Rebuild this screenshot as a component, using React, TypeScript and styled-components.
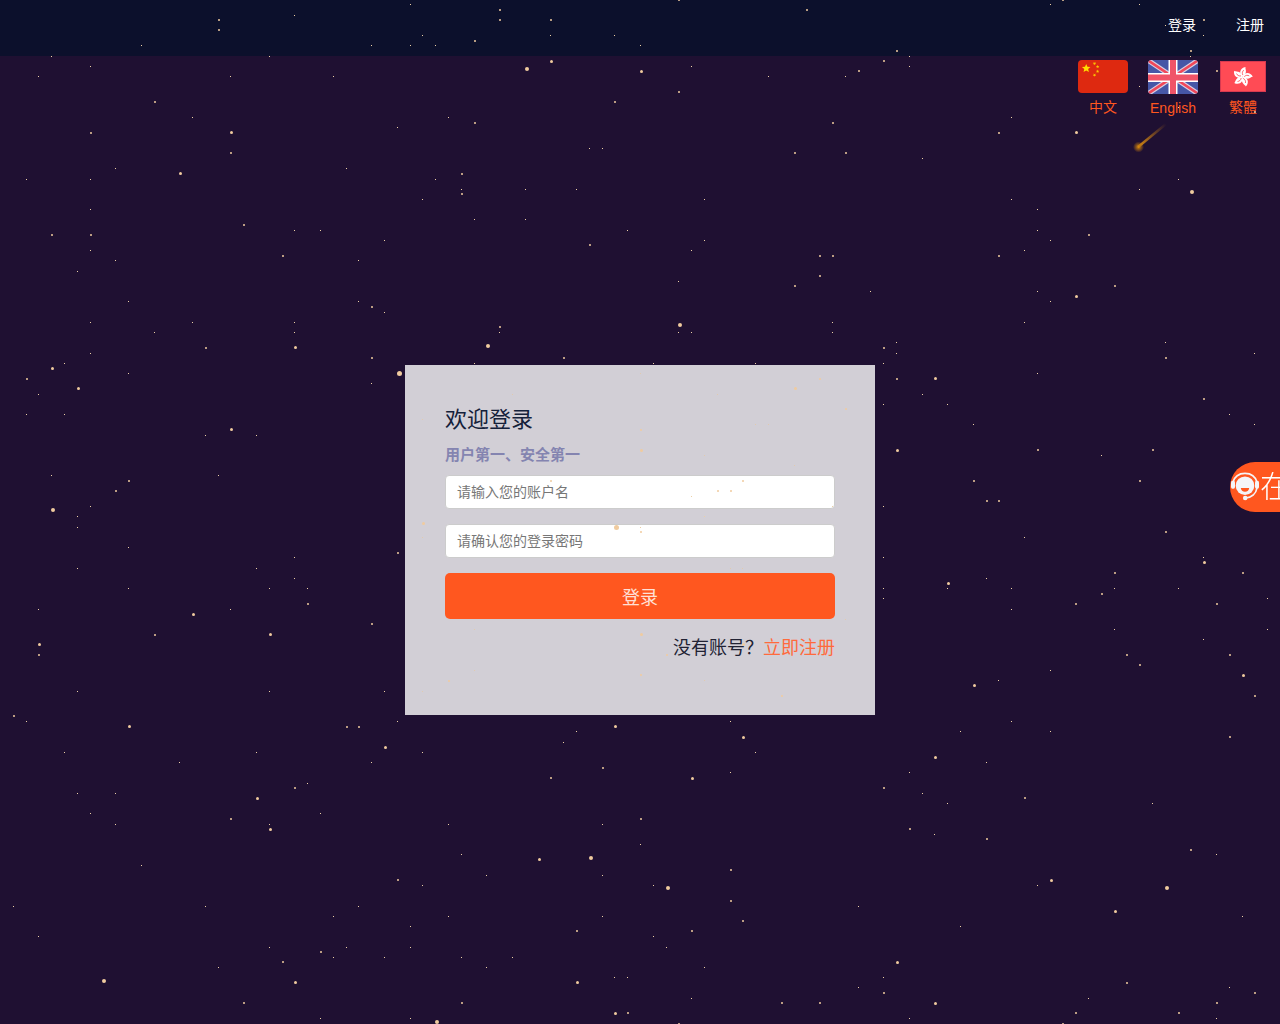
import React from "react";
import styled, { createGlobalStyle } from "styled-components";

const GlobalStyle = createGlobalStyle`
  *, *::before, *::after { box-sizing: border-box; }
  body {
    margin: 0;
    background: #1f1032;
    color: #212233;
    font-family: "Liberation Sans", "Noto Sans CJK SC", sans-serif;
    font-size: 14px;
    line-height: 20px;
  }
`;

const ACCENT = "#ff571f";

const Page = styled.div`
  position: relative;
  min-height: 100vh;
  display: flex;
  flex-direction: column;
  overflow: hidden;
`;

const Header = styled.header`
  height: 56px;
  flex: none;
  display: flex;
  align-items: center;
  justify-content: flex-end;
  gap: 40px;
  padding: 0 16px 6px;
  background: #0c102c;
`;

const NavLink = styled.a`
  color: #fff;
  text-decoration: none;
`;

const Main = styled.main`
  flex: 1;
  display: grid;
`;

const Languages = styled.nav`
  grid-area: 1 / 1;
  justify-self: end;
  align-self: start;
  display: flex;
  gap: 20px;
  padding: 4px 12px;
`;

const Language = styled.a`
  width: 50px;
  display: flex;
  flex-direction: column;
  align-items: center;
  gap: 4px;
  color: ${ACCENT};
  text-decoration: none;
  svg { display: block; }
`;

const Card = styled.form`
  grid-area: 1 / 1;
  place-self: center;
  width: 470px;
  max-width: 100%;
  min-height: 350px;
  padding: 40px;
  display: flex;
  flex-direction: column;
  background: rgba(255, 255, 255, 0.8);
`;

const Title = styled.h1`
  margin: 0;
  font-size: 22px;
  line-height: 30px;
  font-weight: 400;
  color: #14213a;
`;

const Subtitle = styled.p`
  margin: 10px 0;
  font-size: 15px;
  font-weight: 700;
  color: #8484b0;
`;

const Field = styled.input`
  width: 100%;
  height: 34px;
  margin-bottom: 15px;
  padding: 0 11px;
  border: 1px solid #ccc;
  border-radius: 4px;
  background: #fff;
  color: #333;
  font: inherit;
  outline: none;
  &::placeholder { color: #777; opacity: 1; }
`;

const Submit = styled.button`
  height: 46px;
  border: 0;
  border-radius: 5px;
  background: ${ACCENT};
  color: #ffe0d6;
  font-family: inherit;
  font-size: 18px;
  cursor: pointer;
`;

const SignUp = styled.p`
  margin: 15px 0 0;
  font-size: 18px;
  line-height: 28px;
  text-align: right;
`;

const SignUpLink = styled.a`
  color: #ff6a3c;
  text-decoration: none;
`;

const Support = styled.a`
  position: fixed;
  top: 462px;
  left: calc(100% - 50px);
  height: 50px;
  display: flex;
  align-items: center;
  padding-right: 20px;
  border-radius: 25px 0 0 25px;
  background: ${ACCENT};
  color: #fff;
  font-size: 30px;
  line-height: 50px;
  font-weight: 300;
  white-space: nowrap;
  text-decoration: none;
  svg { flex: none; }
`;

const Sky = styled.svg`
  position: absolute;
  inset: 0;
  width: 100%;
  height: 100%;
  pointer-events: none;
`;

const parse = (s: string) => s.trim().split(/\s+/).map((p) => p.split(",").map(Number));

const tiny = parse(`
410,4 294,15 422,35 141,45 371,45 410,45 51,56 269,56 90,66 38,76 230,76 333,76 192,117 397,127 115,168 346,168
26,179 90,179 422,199 90,209 294,230 320,230 384,240 90,250 115,260 358,260 77,271 128,301 358,301 384,312
90,322 192,322 294,322 154,332 294,332 90,353 64,363 128,373 371,383 38,394 26,414 64,414 205,435 256,435
51,475 218,475 90,506
435,45 550,35 614,35 640,45 691,66 768,76 845,76 448,117 589,148 602,148 435,179 461,189 525,189 576,189
704,199 474,219 525,219 627,230 704,240 691,250 678,281 832,322 499,332 678,332 691,332 832,332 474,363
653,363 755,363
1050,4 1139,4 1165,25 1203,35 909,56 909,66 1190,56 1139,86 1178,107 1011,117 922,158 1139,189 1178,179
1011,199 1037,209 1037,230 1050,240 1024,250 870,291 1037,291 1050,301 1024,322 896,342 896,353 883,363
1165,342 1254,353 1037,373 922,394 883,404 947,404 973,424 1229,414 1254,424 1101,455 883,506
77,516 77,527 128,547 77,568 294,557 256,568 294,578 128,588 269,588 307,588 38,609 230,609 77,691 269,691
384,691 26,721 397,721 64,752 256,752 422,752 179,762 371,762 77,793 115,793 307,783 90,813 320,813 115,824
269,824 141,865 422,885 13,906 205,906 358,906 333,916 38,936 410,926 269,947 346,947 410,947 333,957 384,957
218,967 320,1018 410,1018
730,721 576,731 563,742 755,752 730,772 448,824 602,824 640,844 461,854 486,875 602,875 653,885 448,916
602,916 653,936 666,947 461,957 512,957 486,967 704,967 614,977 627,977 691,998
1024,537 883,557 1203,557 986,578 883,588 883,598 947,588 1011,588 1114,588 1178,588 1267,598 1011,609
1114,629 1267,629 1203,639 1050,670 998,680 1011,721 960,731 1050,731 986,762 909,772 922,793 947,803
1152,803 934,834 1216,854 1037,885 858,906 1242,916 960,926 883,977 858,987 1229,987 1088,998 909,1018 1216,1018
512,486 640,527 691,496 832,506 704,516`);

const faint = parse(`
512,394 422,419 640,373 422,537 717,394 755,424 768,424 704,455 794,465 730,568 742,568 474,629 474,670
704,680 422,691 845,619`);

const small = parse(`
218,19 218,29 154,101 90,132 230,152 51,234 90,234 243,224 282,255 371,306 205,347 371,357 26,378 128,480
115,490 678,-1 499,9 499,19 550,19 474,40 806,9 678,91 614,101 474,122 832,122 794,152 845,152 461,173
461,193 589,244 819,255 832,255 819,275 794,285 499,326 563,357
1062,-1 1203,19 896,50 1190,50 883,60 858,70 1216,70 1254,111 998,132 1088,234 998,255 1114,285 883,347
1165,357 896,378 1203,398 1037,449 1152,449 973,480 1139,480 986,500 998,500
397,552 307,603 154,634 371,623 38,654 13,715 346,726 358,726 294,787 230,818 397,879 320,951 282,961 243,1002
602,767 550,777 640,818 730,869 730,900 742,920 576,930 691,930 461,1002 781,1002 819,1002 627,1012 678,1023
1165,531 1114,572 1242,572 1101,593 1075,603 1216,603 1126,654 1229,654 1139,664 1254,695 1229,736 883,787
1024,797 909,828 986,838 1190,849 1126,982 883,992 1254,992 1216,1002 1075,1012 1178,1012 1062,1023
640,429 550,480 640,531 666,654 640,674 448,680 781,695 819,378 845,408 742,480 717,490 730,490`);

const medium = parse(`
231,132 180,173 295,347 52,368 78,388 231,429 551,61 641,71 1076,132 1076,296 935,378 897,450
193,614 39,644 270,634 129,726 385,747 257,798 270,829 295,982 615,726 743,737 692,778 539,859 577,982
615,1013 1204,562 948,583 1243,675 974,685 935,757 1051,880 1115,911 897,962 935,1003
641,450 423,523 641,634 743,644 795,388`);

const large = parse(`
53,510 527,69 680,325 488,346 1192,192 104,981 591,858 668,888 437,1022 1167,888`);

const giant = parse(`399,373 616,527`);

const StarField = () => (
  <Sky viewBox="0 0 1280 1024" preserveAspectRatio="xMidYMid slice" aria-hidden="true">
    <defs>
      <linearGradient id="tail" gradientUnits="userSpaceOnUse" x1="1138" y1="147" x2="1166" y2="124">
        <stop offset="0" stopColor="#d98a10" />
        <stop offset="1" stopColor="#d98a10" stopOpacity="0" />
      </linearGradient>
      <radialGradient id="glow">
        <stop offset="0" stopColor="#d98a10" />
        <stop offset="0.4" stopColor="#b8720f" stopOpacity="0.7" />
        <stop offset="1" stopColor="#b8720f" stopOpacity="0" />
      </radialGradient>
    </defs>
    <g fill="#ecd0a6">
      {tiny.map(([x, y]) => <rect key={`${x}-${y}`} x={x} y={y} width="1" height="1" />)}
    </g>
    <g fill="#ecc796" opacity="0.6">
      {faint.map(([x, y]) => <rect key={`${x}-${y}`} x={x} y={y} width="1" height="1" />)}
    </g>
    <g fill="#f0cb9f">
      {small.map(([x, y]) => <circle key={`${x}-${y}`} cx={x + 1} cy={y + 1} r="1" />)}
      {medium.map(([x, y]) => <circle key={`${x}-${y}`} cx={x + 0.5} cy={y + 0.5} r="1.5" />)}
      {large.map(([x, y]) => <circle key={`${x}-${y}`} cx={x} cy={y} r="2" />)}
      {giant.map(([x, y]) => <circle key={`${x}-${y}`} cx={x + 0.5} cy={y + 0.5} r="2.5" />)}
    </g>
    <path d="M1138 147L1166 124" stroke="url(#tail)" strokeWidth="2.4" />
    <circle cx="1138.5" cy="147" r="5.5" fill="url(#glow)" />
  </Sky>
);

const star = (cx: number, cy: number, r: number, turn = -90) =>
  Array.from({ length: 10 }, (_, i) => {
    const a = ((turn + i * 36) * Math.PI) / 180;
    const d = i % 2 ? r * 0.45 : r;
    return `${cx + d * Math.cos(a)},${cy + d * Math.sin(a)}`;
  }).join(" ");

const ChinaFlag = () => (
  <svg width="50" height="33" viewBox="0 0 50 33" aria-hidden="true">
    <rect width="50" height="33" rx="4" fill="#de2910" />
    <g fill="#ffde00">
      <polygon points={star(8.2, 8.4, 4.5)} />
      <g opacity="0.85">
        <polygon points={star(16.5, 3.5, 1.8, 20)} />
        <polygon points={star(19.6, 6.7, 1.8, 50)} />
        <polygon points={star(19.6, 11.4, 1.8)} />
        <polygon points={star(16.5, 15, 1.8, 20)} />
      </g>
    </g>
  </svg>
);

const UkFlag = () => (
  <svg width="50" height="34" viewBox="0 0 50 34" aria-hidden="true">
    <clipPath id="uk"><rect width="50" height="34" rx="4" /></clipPath>
    <g clipPath="url(#uk)">
      <rect width="50" height="34" fill="#4657a7" />
      <path d="M1 1L49 33M49 1L1 33" stroke="#d9cfe2" strokeWidth="5" strokeLinecap="square" />
      <path d="M1 1L49 33M49 1L1 33" stroke="#f0485a" strokeWidth="2.6" strokeLinecap="square" />
      <path d="M25 0V34M0 17.5H50" stroke="#fff" strokeWidth="9" />
      <path d="M25 0V34M0 17.5H50" stroke="#f05468" strokeWidth="6" />
    </g>
  </svg>
);

const HongKongFlag = () => (
  <svg width="50" height="33" viewBox="0 0 50 33" aria-hidden="true">
    <rect x="2.5" y="1.5" width="45" height="30" fill="#ff4b55" stroke="#d73a50" />
    {[0, 72, 144, 216, 288].map((a) => (
      <g key={a} transform={`rotate(${a + 8} 24.5 16.8)`}>
        <path d="M24.5 16.8C20.3 14.6 20.4 8.4 26.2 6.6C25.4 8.6 30 11.6 24.5 16.8Z" fill="#fff" />
        <path d="M24.6 15C23.4 13.2 23.6 11.4 24.8 10" fill="none" stroke="#ff4b55" strokeWidth="0.8" />
      </g>
    ))}
  </svg>
);

const HeadsetIcon = () => (
  <svg width="30" height="30" viewBox="0 0 30 30" aria-hidden="true">
    <circle cx="15" cy="13.7" r="9.3" fill="#f5f5f8" />
    <path d="M10.8 16H19.2C19 18.4 17.4 19.8 15 19.8S11 18.4 10.8 16Z" fill={ACCENT} />
    <path d="M2.8 10.5C4.5 4.7 9 1.4 15 1.4S25.5 4.7 27.2 10.5" fill="none" stroke="#f5f5f8" strokeWidth="1.6" />
    <path d="M27 16C26 21.8 21.5 25.6 15.5 26" fill="none" stroke="#f5f5f8" strokeWidth="1.6" />
    <rect x="1" y="8.7" width="4" height="8" rx="1.6" fill="#f5f5f8" />
    <rect x="25" y="8.7" width="4" height="8" rx="1.6" fill="#f5f5f8" />
    <circle cx="15.2" cy="26" r="2.3" fill="#f5f5f8" />
  </svg>
);

export default function App() {
  return (
    <Page>
      <GlobalStyle />
      <Header>
        <NavLink href="#login">登录</NavLink>
        <NavLink href="#register">注册</NavLink>
      </Header>
      <Main>
        <Languages aria-label="Language">
          <Language href="#zh-cn"><ChinaFlag />中文</Language>
          <Language href="#en"><UkFlag />English</Language>
          <Language href="#zh-hk"><HongKongFlag />繁體</Language>
        </Languages>
        <Card onSubmit={(e: React.FormEvent) => e.preventDefault()}>
          <Title>欢迎登录</Title>
          <Subtitle>用户第一、安全第一</Subtitle>
          <Field type="text" aria-label="请输入您的账户名" placeholder="请输入您的账户名" />
          <Field type="password" aria-label="请确认您的登录密码" placeholder="请确认您的登录密码" />
          <Submit type="submit">登录</Submit>
          <SignUp>没有账号？<SignUpLink href="#register">立即注册</SignUpLink></SignUp>
        </Card>
      </Main>
      <StarField />
      <Support href="#support"><HeadsetIcon />在线客服</Support>
    </Page>
  );
}
